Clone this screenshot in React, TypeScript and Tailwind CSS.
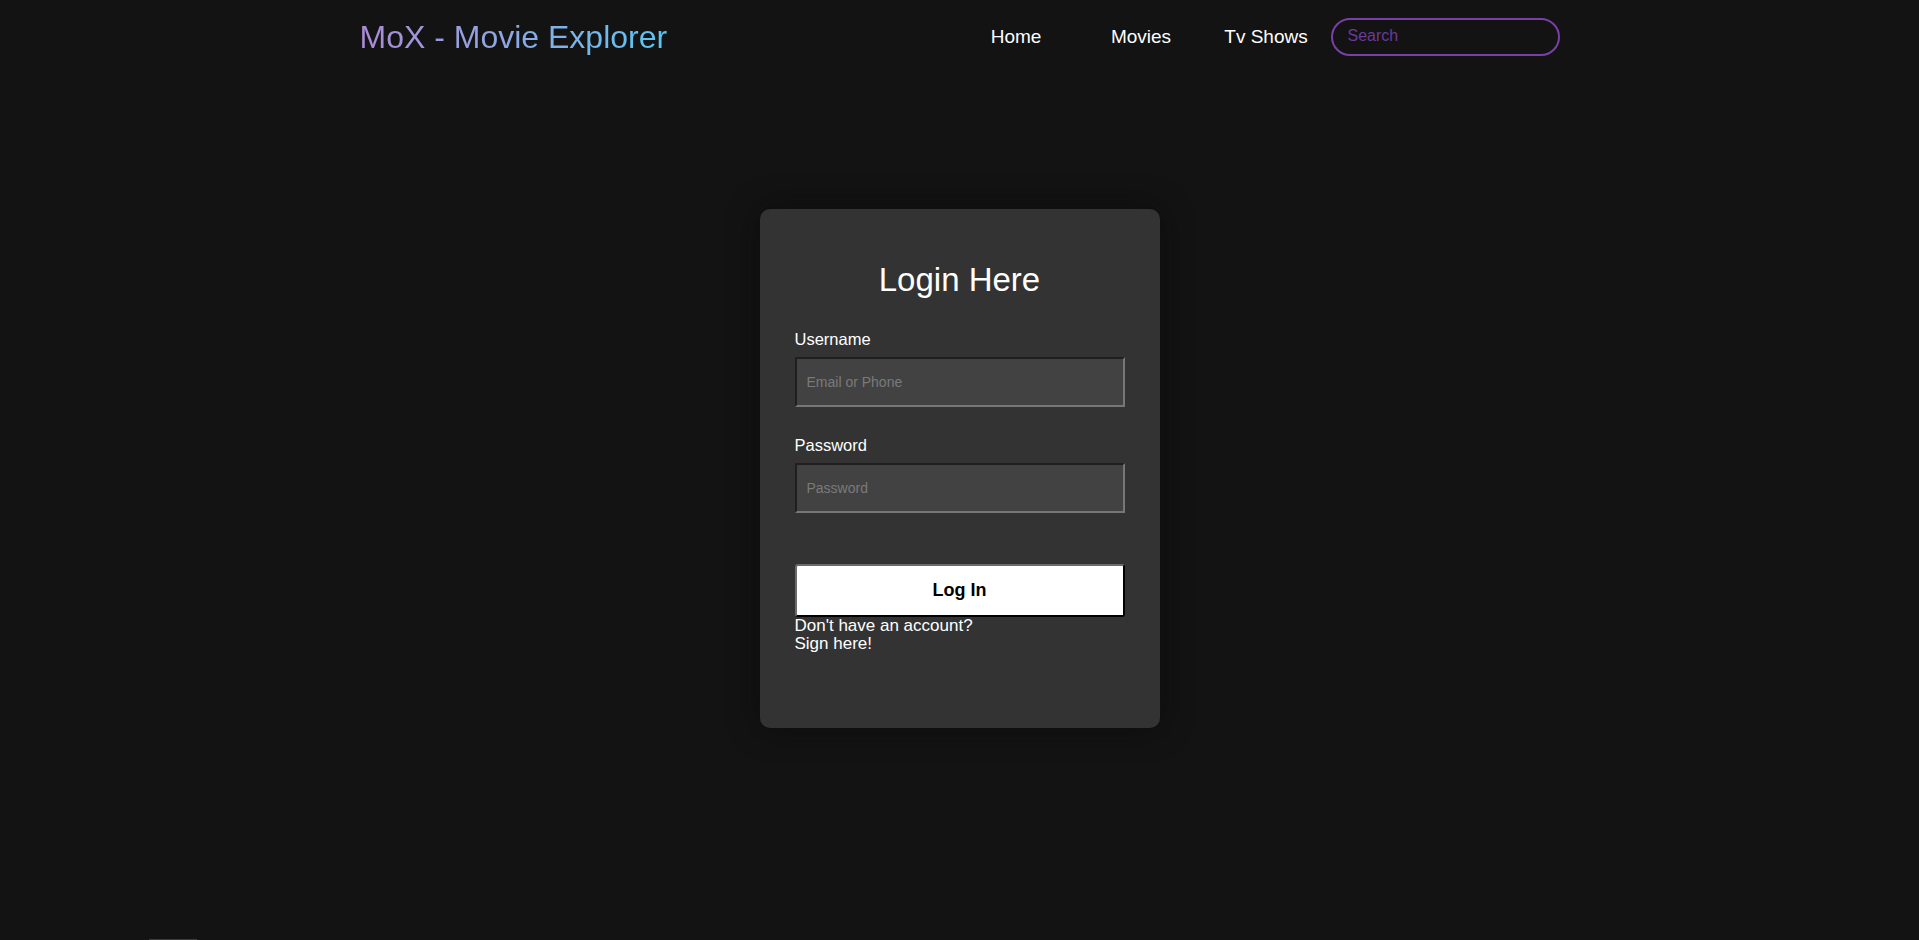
import { useState } from "react";

const navLinks = ["Home", "Movies", "Tv Shows"];

export default function App() {
  const [username, setUsername] = useState("");
  const [password, setPassword] = useState("");
  const [search, setSearch] = useState("");

  return (
    <div className="min-h-screen bg-[#131313] text-white font-['Liberation_Sans',Arial,sans-serif]">
      {/* Header */}
      <header className="h-[73px]">
        <div className="mx-auto flex h-full w-[1200px] items-center">
          <h1 className="bg-linear-to-r from-[#a98ad6] to-[#55c6f2] bg-clip-text text-[32px] leading-[38px] text-transparent">
            MoX - Movie Explorer
          </h1>
          <nav className="ml-auto flex items-center">
            {navLinks.map((link) => (
              <a key={link} href="#" className="w-[125px] pt-[2px] text-center text-[19px] text-white">
                {link}
              </a>
            ))}
            <input
              type="text"
              placeholder="Search"
              value={search}
              onChange={(e) => setSearch(e.target.value)}
              className="ml-[2px] h-[38px] w-[229px] rounded-full border-2 border-[#7a3fa8] bg-transparent px-[15px] pb-[2px] text-[16px] text-white outline-none placeholder:text-[#6b3a9a]"
            />
          </nav>
        </div>
      </header>

      {/* Login card */}
      <main className="flex h-[866px] justify-center pt-[136px]">
        <div className="h-[519px] w-[400px] rounded-[10px] bg-[#333333] px-[35px] pt-[52px] shadow-[0_0_30px_rgba(8,8,8,0.6)]">
          <h2 className="text-center text-[33px] leading-[38px]">Login Here</h2>

          <label className="mt-[31px] block text-[16.5px] leading-[18px]">Username</label>
          <input
            type="text"
            placeholder="Email or Phone"
            value={username}
            onChange={(e) => setUsername(e.target.value)}
            className="mt-[9px] block h-[50px] w-full border-2 border-t-[#1f1f1f] border-l-[#1f1f1f] border-r-[#777777] border-b-[#777777] bg-[#424242] px-[10px] text-[14px] text-white outline-none placeholder:text-[#7a7a7a]"
          />

          <label className="mt-[29px] block text-[16.5px] leading-[18px]">Password</label>
          <input
            type="password"
            placeholder="Password"
            value={password}
            onChange={(e) => setPassword(e.target.value)}
            className="mt-[9px] block h-[50px] w-full border-2 border-t-[#1f1f1f] border-l-[#1f1f1f] border-r-[#777777] border-b-[#777777] bg-[#424242] px-[10px] text-[14px] text-white outline-none placeholder:text-[#7a7a7a]"
          />

          <button className="mt-[51px] block h-[53px] w-full rounded-[3px] border-2 border-t-[#6b6b6b] border-l-[#6b6b6b] border-r-black border-b-black bg-white text-[18px] font-bold text-black">
            Log In
          </button>

          <p className="text-[17px] leading-[18px]">
            Don't have an account?
            <br />
            Sign here!
          </p>
        </div>
      </main>

      {/* Footer peeking at the bottom */}
      <footer className="h-[20px]">
        <div className="ml-[149px] h-full w-[48px] bg-[#3b3b3b]" />
      </footer>
    </div>
  );
}
